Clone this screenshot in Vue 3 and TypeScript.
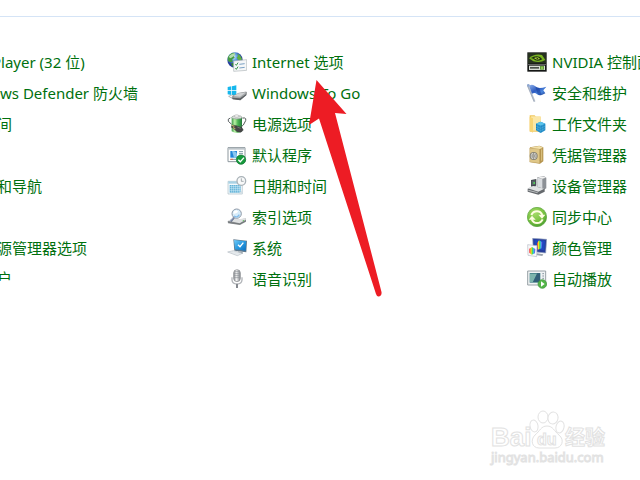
<script setup lang="ts">
interface Item {
  label: string
  icon: string
}

const partialItems: string[] = ['Player (32 位)', 'ws Defender 防火墙', '间', '', '和导航', '', '源管理器选项', '户']

const middleItems: Item[] = [
  {
    label: 'Internet 选项',
    icon: `<defs><radialGradient id="globe" cx=".4" cy=".3"><stop offset="0" stop-color="#d6f0ff"/><stop offset=".5" stop-color="#5d9ce0"/><stop offset="1" stop-color="#243c9c"/></radialGradient></defs>
      <circle cx="24" cy="24" r="23" fill="url(#globe)"/>
      <path d="M2 18C5 8 13 2 21 2L25 6 20 12 23 17 16 22 17 29 10 31 3 27Z" fill="#459b44"/><path d="M31 5L39 10 45 20 42 27 34 24 29 17 33 12Z" fill="#5eaf45"/><path d="M12 33L21 34 24 45 15 43Z" fill="#39873d"/><path d="M5 15Q13 3 25 4L22 11 11 19Z" fill="#d9f3d0" opacity=".75"/>
      <path d="M20 27L59 23V55L20 58Z" fill="#f5f7f8" stroke="#b0b6ba" stroke-width="2"/><path d="M25 37l3 3 5-8M25 49l3 3 5-8" fill="none" stroke="#339344" stroke-width="3"/><path d="M37 37l16-2M37 48l16-2" stroke="#7ba1c4" stroke-width="3"/>`,
  },
  {
    label: 'Windows To Go',
    icon: `<path d="M2 12l11-2v12H2zM15 10l13-3v15H15zM2 24h11v12L2 34zM15 24h13v14l-13-2z" fill="#16b7ed"/>
      <path d="M5 40l11-4 12 4-10 7Z" fill="#f0f0f0" stroke="#85898c" stroke-width="2"/><path d="M17 40l18-9 23-4v7L40 50 17 47Z" fill="#a4a7a9" stroke="#707477" stroke-width="2"/><path d="M18 39l17-8 22-3-18 13Z" fill="#d1d3d4"/><path d="M17 44l22 2 19-13v4L40 52 17 49Z" fill="#5c6063"/><path d="M8 41l8-3" stroke="#fff" stroke-width="2"/>`,
  },
  {
    label: '电源选项',
    icon: `<defs><linearGradient id="battery"><stop stop-color="#3e9c4b"/><stop offset=".3" stop-color="#b9f0a4"/><stop offset=".6" stop-color="#4cb653"/><stop offset="1" stop-color="#23793a"/></linearGradient></defs>
      <path d="M10 12Q1 14 4 22L14 31" fill="none" stroke="#5b6163" stroke-width="3"/><path d="M14 9v43q16 9 31 0V9z" fill="url(#battery)"/><ellipse cx="29.500" cy="10" rx="15.500" ry="5" fill="#d9ddda" stroke="#8c9a93" stroke-width="2"/><ellipse cx="29" cy="6" rx="7" ry="4" fill="#eee" stroke="#888"/>
      <path d="M46 12h7q5 1 3 8l-7 13-7 6" fill="none" stroke="#555c59" stroke-width="3"/><path d="M15 33l14 2 16 6 4 7-7 7-12-2-12-11-5-2Z" fill="#454646" stroke="#2a2e2c" stroke-width="1"/><path d="M14 34l8 3m-4 4l7 3" stroke="#d6c36b" stroke-width="3"/><path d="M31 39l10 4" stroke="#8b8d8c" stroke-width="2"/>`,
  },
  {
    label: '默认程序',
    icon: `<path d="M3 8h51v42H3z" fill="#fff" stroke="#8d979d" stroke-width="3"/><path d="M4 9h49v5H4z" fill="#bdc5ca"/><path d="M10 18h20v20H10z" fill="#2387db"/><path d="M15 18q13 0 15 10v10h-9z" fill="#8bc7f1"/><path d="M36 20h12M36 26h12M10 43h17" stroke="#7d9aa4" stroke-width="3"/><path d="M10 43h8" stroke="#e36b4d" stroke-width="3"/>
      <circle cx="42" cy="44" r="14" fill="#169a3c" stroke="#08702a" stroke-width="2"/><path d="M34 44l6 6 11-12" fill="none" stroke="#fff" stroke-width="4"/>`,
  },
  {
    label: '日期和时间',
    icon: `<path d="M3 16h43v38H3z" fill="#f4f9fc" stroke="#aebec6" stroke-width="2"/><path d="M4 16h42v7H4z" fill="#a9d2e5"/><path d="M8 27h33v23H8z" fill="#5caed4"/><path d="M8 32h33M8 38h33M8 44h33M14 27v23M20 27v23M26 27v23M32 27v23M37 27v23" stroke="#dff4fc" stroke-width="1.5"/><path d="M34 54l12-12v12z" fill="#d4e0e6"/>
      <circle cx="43" cy="15" r="13" fill="#f8f9f9" stroke="#a9b2b8" stroke-width="4"/><path d="M43 7v9h7" fill="none" stroke="#7b868e" stroke-width="2"/>`,
  },
  {
    label: '索引选项',
    icon: `<path d="M2 43l15-8 20 3 20-4v10L39 54 3 49Z" fill="#8b8f92"/><path d="M3 41l15-7 19 3 18-4 3 4-20 12Z" fill="#dfe1e2"/><path d="M4 46l34 5 18-9" fill="none" stroke="#6a6e71" stroke-width="2"/><circle cx="29" cy="20" r="14" fill="#d7ecfa" stroke="#8f99a6" stroke-width="3"/><path d="M19 20Q19 10 29 10L34 14Q26 22 19 20Z" fill="#fff"/><path d="M21 27q9 7 16-4" stroke="#83bdec" stroke-width="4" fill="none"/><path d="M21 32L11 43" stroke="#5d6988" stroke-width="6"/><path d="M20 32L10 42" stroke="#b4c0d6" stroke-width="3"/><circle cx="49" cy="41" r="2" fill="#60bf5b"/>`,
  },
  {
    label: '系统',
    icon: `<defs><linearGradient id="screen" x2="1" y2="1"><stop stop-color="#72ccfa"/><stop offset=".5" stop-color="#289ae0"/><stop offset="1" stop-color="#0a6ec0"/></linearGradient></defs>
      <path d="M19 4l41 4-2 35-36-5Z" fill="#60788b"/><path d="M21 6l37 4-2 28-32-4Z" fill="url(#screen)"/><path d="M33 20l6 6 10-12" fill="none" stroke="#fff" stroke-width="4"/><path d="M33 40l14 2v6l-15-2Z" fill="#9ca5ab"/><path d="M2 42l17-4 27 8-15 7Z" fill="#eef2f4" stroke="#b3bbc1" stroke-width="2"/><path d="M9 42l24 7M15 40l24 7" stroke="#c8ced3" stroke-width="1"/>`,
  },
  {
    label: '语音识别',
    icon: `<defs><linearGradient id="mic"><stop stop-color="#83868b"/><stop offset=".4" stop-color="#f6f6f6"/><stop offset="1" stop-color="#83868c"/></linearGradient></defs>
      <rect x="20" y="2" width="20" height="36" rx="10" fill="url(#mic)" stroke="#85888b" stroke-width="2"/><path d="M21 14h17M21 20h17M21 26h17M24 8h12" stroke="#8a8e94" stroke-width="2"/><path d="M15 25v8q1 12 15 12t15-12v-8" fill="none" stroke="#b2b5b9" stroke-width="4"/><path d="M30 45v12" stroke="#85898f" stroke-width="6"/>`,
  },
]

const rightItems: Item[] = [
  {
    label: 'NVIDIA 控制面',
    icon: `<path d="M1 1h58v58H1z" fill="#151716"/><path d="M3 3h54v31H3z" fill="#26311f"/><path d="M6 19Q22 4 45 9L55 24Q40 34 19 28Z" fill="#79b421"/><path d="M12 18Q25 9 39 15L46 22Q36 29 25 25L19 20Z" fill="#1b2a12"/><path d="M21 18Q31 13 39 20 33 25 24 20Z" fill="#b0d83a"/><path d="M28 18l6 3" stroke="#1b2a12" stroke-width="3"/><path d="M3 36h54v2H3z" fill="#888"/><path d="M6 41h48v13H6z" fill="#d8ddd5"/><path d="M9 45h27v5H9z" fill="#4c514c"/><path d="M39 42h12v11H39z" fill="#5d9a35"/><path d="M45 44v7" stroke="#c2ed79" stroke-width="3"/>`,
  },
  {
    label: '安全和维护',
    icon: `<defs><linearGradient id="flag" x2="1" y2="1"><stop stop-color="#91b3ec"/><stop offset=".45" stop-color="#2f5cc0"/><stop offset=".7" stop-color="#4c88df"/><stop offset="1" stop-color="#1b3789"/></linearGradient></defs>
      <path d="M3 8l20 48" stroke="#b4bdca" stroke-width="5"/><path d="M1 8l20 48" stroke="#73829a" stroke-width="1"/><path d="M6 8Q17 1 25 10 34 19 58 11L49 22 55 31Q39 41 30 34 24 27 15 32Z" fill="url(#flag)"/><path d="M25 11l7 22q6 5 12 3L37 16Z" fill="#1d44a2" opacity=".6"/><circle cx="4" cy="7" r="4" fill="#8da6cf"/>`,
  },
  {
    label: '工作文件夹',
    icon: `<path d="M8 4h15l4 4h14v45H8z" fill="#f0c860"/><path d="M12 7h29v43H12z" fill="#fbe7a7"/><path d="M8 8l10 5v43L8 50z" fill="#f8d574"/><path d="M27 29l14-6 14 6v20l-14 8-14-8z" fill="#1483c2"/><path d="M27 29l14 6 14-6-14-6z" fill="#5bc2ea"/><path d="M41 35v22M32 31v21M36 33v21M46 33v21M51 31v20M27 36l14 7 14-7M27 43l14 7 14-7" fill="none" stroke="#79c6e6" stroke-width="1"/>`,
  },
  {
    label: '凭据管理器',
    icon: `<path d="M9 7l28-5 12 5v42l-10 7-30-5z" fill="#b6954f"/><path d="M8 9l30 3v43L8 51z" fill="#dfc788" stroke="#b39352" stroke-width="1"/><path d="M9 8l28-5 11 5-10 4z" fill="#f3e2ab"/><circle cx="20" cy="33" r="12" fill="#858276"/><circle cx="20" cy="33" r="9" fill="#e9e8e2"/><path d="M20 24v18M11 33h18M14 27l12 12M26 27L14 39" stroke="#5f5e58" stroke-width="2"/><circle cx="20" cy="33" r="4" fill="#a7a59b"/><path d="M44 13v34" stroke="#dec887" stroke-width="3"/>`,
  },
  {
    label: '设备管理器',
    icon: `<path d="M31 4l20-3 7 4v32l-14 8-14-5z" fill="#8d9196"/><path d="M31 5l15 3v35l-15-5z" fill="#d9dcdf"/><path d="M32 4l18-2 7 3-11 3z" fill="#f3f3f3"/><path d="M12 12l16-3v20l-16 3z" fill="#42484d"/><path d="M14 15l11-2v13l-11 2z" fill="#596168"/><path d="M19 18h5v6h-5z" fill="#55c75b"/><path d="M2 38l17-8 34 8v9L34 56 2 47z" fill="#65696d"/><path d="M2 37l17-7 33 8-18 9z" fill="#e0e2e3"/><path d="M4 43l28 7" stroke="#bbbec0" stroke-width="3"/>`,
  },
  {
    label: '同步中心',
    icon: `<defs><radialGradient id="sync" cx=".4" cy=".3" r=".7"><stop stop-color="#a6db68"/><stop offset=".65" stop-color="#78c140"/><stop offset="1" stop-color="#4fa231"/></radialGradient></defs>
      <circle cx="30" cy="30" r="29" fill="url(#sync)" stroke="#57a33a" stroke-width="2"/><path d="M13 24Q18 13 30 13 41 13 46 24" fill="none" stroke="#fffde2" stroke-width="6"/><path d="M55 23l-10 12-11-12z" fill="#fffde2"/><path d="M47 37Q42 48 30 48 19 48 14 37" fill="none" stroke="#fffde2" stroke-width="6"/><path d="M5 38l10-12 11 12z" fill="#fffde2"/>`,
  },
  {
    label: '颜色管理',
    icon: `<defs><linearGradient id="spectrum"><stop stop-color="#f51c2e"/><stop offset=".28" stop-color="#ffdd25"/><stop offset=".5" stop-color="#4ddb4b"/><stop offset=".72" stop-color="#34b9f5"/><stop offset="1" stop-color="#8c36de"/></linearGradient></defs>
      <path d="M17 1l42 3-3 41-37-4z" fill="#273e9a" stroke="#9aa8c0" stroke-width="2"/><path d="M22 5l32 3-2 29-29-3z" fill="#2048c0"/><path d="M36 7l10 6-2 18-12 4-2-19z" fill="url(#spectrum)"/><path d="M30 46l19 3-3 5-20-3z" fill="#9ba3ad"/><path d="M2 20l28 3-1 33-26-4z" fill="#f8f8fa" stroke="#b8bdc5" stroke-width="2"/><path d="M15 27l10 6-1 13-10 4-7-6V32z" fill="url(#spectrum)"/>`,
  },
  {
    label: '自动播放',
    icon: `<path d="M2 6h54v42H2z" fill="#f0f3f4" stroke="#98a2a7" stroke-width="3"/><path d="M8 12h32v29H8z" fill="#3d7b85"/><path d="M9 14h21L18 39H9z" fill="#7bb4ac"/><path d="M31 13h8v26H18z" fill="#315f78"/><path d="M46 14h5M46 21h5M46 28h5" stroke="#8896a0" stroke-width="3"/><circle cx="46" cy="45" r="13" fill="#53b548" stroke="#3c9439" stroke-width="2"/><path d="M42 37l11 8-11 8z" fill="#fff"/>`,
  },
]

const columns: Item[][] = [middleItems, rightItems]
</script>

<template>
  <main class="panel">
    <header class="topbar"></header>
    <nav class="items">
      <ul class="column partial">
        <li v-for="(label, i) in partialItems" :key="i" class="row">
          <a v-if="label" href="#" :class="{ leading: i === 0, latin: i === 1 }">{{ label }}</a>
        </li>
      </ul>
      <ul v-for="(column, c) in columns" :key="c" class="column">
        <li v-for="item in column" :key="item.label" class="row">
          <a href="#">
            <svg class="icon" viewBox="0 0 60 60" aria-hidden="true" v-html="item.icon"></svg>
            <span>{{ item.label }}</span>
          </a>
        </li>
      </ul>
    </nav>

    <svg class="arrow" viewBox="308 79 75 219" aria-hidden="true">
      <path d="M316.5 80L346.5 114 335 113 381.5 292Q382 296 379 296.5 377 297 376 294L319 118.5 309 125Z" fill="#ed1c24" />
    </svg>

    <svg class="watermark" viewBox="488 408 122 60">
      <g class="mark">
        <ellipse cx="534" cy="426" rx="4" ry="6" transform="rotate(-12 534 426)" />
        <ellipse cx="543" cy="417" rx="5" ry="6" />
        <ellipse cx="553" cy="418" rx="5" ry="6" transform="rotate(12 553 418)" />
        <ellipse cx="560" cy="427" rx="4" ry="6" transform="rotate(15 560 427)" />
        <path d="M547 426C553 426 554 431 559 435 565 440 562 448 555 448H539C532 448 530 440 535 435 540 431 541 426 547 426Z" />
        <text x="491" y="446" class="brand">Bai</text>
        <text x="537" y="445" class="du">du</text>
        <text x="565" y="445" class="cn">经验</text>
        <text x="491" y="462" class="site">jingyan.baidu.com</text>
      </g>
    </svg>
  </main>
</template>

<style>
body {
  margin: 0;
  background: #fff;
}
</style>

<style scoped>
.panel {
  position: relative;
  min-height: 100vh;
  overflow: hidden;
  font-family: "Noto Sans", "Noto Sans CJK SC", sans-serif;
  font-size: 15px;
  line-height: 20px;
}

.topbar {
  height: 16px;
  border-bottom: 1px solid #d5e4f6;
}

.items {
  display: grid;
  grid-template-columns: 227px 300px minmax(0, 1fr);
  padding-top: 29px;
}

.column {
  margin: 0;
  padding: 0;
  list-style: none;
  overflow: hidden;
}

.row {
  display: flex;
  align-items: center;
  height: 31px;
}

.row a {
  display: flex;
  align-items: center;
  gap: 5px;
  color: #00700e;
  text-decoration: none;
  white-space: nowrap;
}

.partial a {
  margin-left: -3px;
}

.partial .leading {
  margin-left: -8px;
}

.partial .latin {
  margin-left: 0;
}

.partial .row:last-child {
  height: 18px;
  align-items: flex-start;
  overflow: hidden;
}

.partial .row:last-child a {
  padding-top: 5px;
}

.icon {
  flex: none;
  width: 20px;
  height: 20px;
}

.arrow {
  position: absolute;
  left: 308px;
  top: 79px;
  width: 75px;
  height: 219px;
  pointer-events: none;
}

.watermark {
  position: absolute;
  right: 30px;
  bottom: 12px;
  width: 122px;
  height: 60px;
}

.mark {
  fill: #fff;
  stroke: #e2e2e2;
  stroke-width: 1;
}

.mark text {
  font-weight: 700;
}

.brand {
  font-family: "Liberation Sans", sans-serif;
  font-size: 26px;
}

.du {
  font-family: "Liberation Sans", sans-serif;
  font-size: 16px;
}

.cn {
  font-size: 20px;
}

.mark .site {
  font-size: 13px;
  font-weight: 400;
}
</style>
